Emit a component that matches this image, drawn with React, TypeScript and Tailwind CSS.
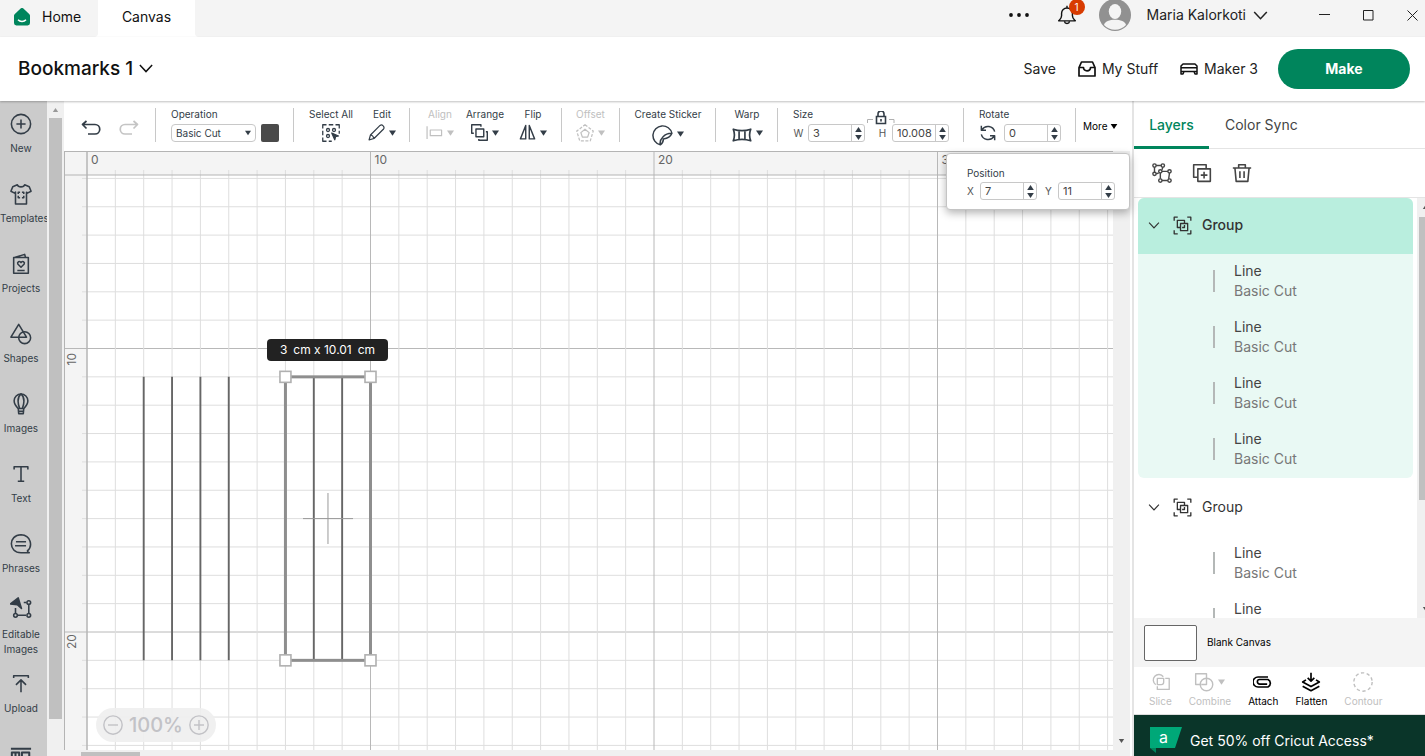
import type { ReactNode } from "react";

type IconProps = { children: ReactNode; className?: string; box?: string };

function Icon({ children, className = "size-[22px]", box = "0 0 24 24" }: IconProps) {
  return (
    <svg
      viewBox={box}
      className={`shrink-0 ${className}`}
      fill="none"
      stroke="currentColor"
      strokeWidth="1.7"
      strokeLinejoin="round"
      aria-hidden="true"
    >
      {children}
    </svg>
  );
}

function Caret({ up = false, className = "w-[7px] h-[6px]" }: { up?: boolean; className?: string }) {
  return (
    <svg viewBox="0 0 8 6" className={`shrink-0 ${className}`} fill="currentColor" aria-hidden="true">
      <path d={up ? "M0 6h8L4 0z" : "M0 0h8L4 6z"} />
    </svg>
  );
}

function Chevron({ className }: { className: string }) {
  return (
    <svg viewBox="0 0 16 10" className={`shrink-0 ${className}`} fill="none" stroke="currentColor" strokeWidth="1.7" aria-hidden="true">
      <path d="M1 1l7 7.5L15 1" />
    </svg>
  );
}

/* ---------- title bar and header ---------- */

function TitleBar() {
  return (
    <div className="flex h-[37px] shrink-0 bg-white text-sm text-[#111]">
      <button className="flex w-[98px] items-center gap-[11px] rounded-br bg-[#f4f4f4] pb-[3px] pl-[13px]">
        <svg viewBox="0 0 18 18" className="size-[18px] shrink-0" aria-hidden="true">
          <path d="M7.6.6a2 2 0 0 1 2.8 0l6 5.6c.4.4.6.9.6 1.4V15a2.4 2.4 0 0 1-2.4 2.4H3.4A2.4 2.4 0 0 1 1 15V7.6c0-.5.2-1 .6-1.4z" fill="#00855c" />
          <path d="M5 11.8c2 2.2 6 2.2 8 0" fill="none" stroke="#fff" strokeWidth="1.4" />
        </svg>
        Home
      </button>
      <button className="w-[97px] bg-white pb-[3px]">Canvas</button>
      <div className="flex flex-1 items-center justify-end rounded-bl bg-[#f4f4f4] pr-[7px] pb-[7px] text-[#222]">
        <button aria-label="Options">
          <svg viewBox="0 0 20 4" className="mr-7 h-1 w-5" fill="#111">
            <circle cx="2" cy="2" r="1.9" />
            <circle cx="10" cy="2" r="1.9" />
            <circle cx="18" cy="2" r="1.9" />
          </svg>
        </button>
        <button className="relative mr-[22px]" aria-label="Notifications">
          <Icon className="size-5">
            <path d="M2 19h20c-2-2-3.5-3-3.5-6v-3a6.500 6.500 0 0 0-13 0v3c0 3-1.5 4-3.5 6zM9 20c.5 3 5.500 3 6 0M12 1v3" stroke="#111" />
          </Icon>
          <span className="absolute -top-1.5 left-3 flex size-4 items-center justify-center rounded-full bg-[#d83b01] text-[10px] text-white">1</span>
        </button>
        <svg viewBox="0 0 32 32" className="mr-4 size-8 shrink-0" aria-label="Profile">
          <circle cx="16" cy="16" r="16" fill="#919191" />
          <ellipse cx="16" cy="12.5" rx="6.2" ry="7.5" fill="#f4f4f4" />
          <path d="M5 26c1-7 21-7 22 0a15 15 0 0 1-22 0z" fill="#f4f4f4" />
        </svg>
        <button className="flex items-center gap-[7px]">
          Maria Kalorkoti
          <Chevron className="h-[9px] w-[15px]" />
        </button>
        <button className="ml-[51px]" aria-label="Minimize">
          <svg viewBox="0 0 11 11" className="size-[11px]" stroke="#222"><path d="M0 4.5h11" /></svg>
        </button>
        <button className="ml-[33px]" aria-label="Maximize">
          <svg viewBox="0 0 11 11" className="size-[11px]" stroke="#222" fill="none"><path d="M.5.5h9.5v9.5H.5z" /></svg>
        </button>
        <button className="ml-[33px]" aria-label="Close">
          <svg viewBox="0 0 11 11" className="size-[11px]" stroke="#222"><path d="M.5.5l10 10M10.5.5l-10 10" /></svg>
        </button>
      </div>
    </div>
  );
}

function Header() {
  return (
    <header className="relative z-10 flex h-16 shrink-0 items-center bg-white pr-[15px] pl-[18px] text-sm text-[#222] shadow-[0_1px_2px_rgba(0,0,0,0.25)]">
      <button className="flex items-center gap-1.5 text-[19px] font-medium text-[#111]">
        Bookmarks 1
        <Chevron className="h-[9px] w-[14px]" />
      </button>
      <div className="ml-auto flex items-center">
        <button>Save</button>
        <button className="ml-[22px] flex items-center gap-1.5">
          <Icon className="h-[16px] w-[18px]" box="0 0 18 16">
            <path d="M1 6.5L3.500 1h11L17 6.500V15H1zM1 6.500h4.500c0 2 1.500 3.300 3.500 3.300s3.500-1.300 3.500-3.300H17" stroke="#111" />
          </Icon>
          My Stuff
        </button>
        <button className="ml-[22px] flex items-center gap-1.5">
          <Icon className="h-3 w-[18px]" box="0 0 18 12">
            <path d="M3 1h12l2 2v8h-2l-1-2.500H4L3 11H1V3zM1 4.800h16M1 8.500h16" stroke="#111" strokeWidth="1.5" />
          </Icon>
          Maker 3
        </button>
        <button className="ml-5 h-10 w-[132px] rounded-full bg-[#00855c] font-bold text-white">Make</button>
      </div>
    </header>
  );
}

/* ---------- left menu ---------- */

const menu = [
  { label: "New", icon: <><circle cx="12" cy="12" r="10.5" /><path d="M12 7v10M7 12h10" /></> },
  { label: "Templates", icon: <><path d="M8 2L3 4 1 9l4 2 1-1v13h12V10l1 1 4-2-2-5-5-2c-1 3-7 3-8 0z" /><path d="M9 12v-2h2M13 10h2v2M15 14v2h-2M11 16H9v-2" /></> },
  { label: "Projects", icon: <><path d="M4 5h16v17H4zM5 5l11-3.500 1 3.500M8 19h8" /><path d="M12 15.500l-3.500-3.500c-1-2 2-4 3.500-1.500 1.500-2.500 4.500-.5 3.500 1.500z" /></> },
  { label: "Shapes", icon: <><path d="M9.500 1.500L1 15.500h17z" /><circle cx="16" cy="16" r="6.5" /></> },
  { label: "Images", icon: <><path d="M9 17C5 13 4.500 11 4.500 8.500a7.500 7.500 0 0 1 15 0c0 2.500-.5 4.500-4.500 8.500zM9 17h6l-.5 5.500h-5zM9.500 20h5" /><path d="M10.500 17C8 10 8.500 4 12 1c3.500 3 4 9 1.500 16" /></> },
  { label: "Text", icon: <path d="M4.500 7V4h15v3M12 4v16M8.500 20h7" /> },
  { label: "Phrases", icon: <path d="M19 19.500c6-5 4-17-7-17.500C-2 2-2 21.500 12 21.500h9c-1-.5-2-1-2-2zM6.500 9.500h11M5.500 14h12" /> },
];

const menuButton = "flex h-[70px] w-[42px] shrink-0 flex-col items-center";

function LeftMenu() {
  return (
    <div className="flex w-16 shrink-0 bg-[#f0f0f0] text-[#333d47]">
      <nav className="flex w-[47px] flex-col overflow-hidden bg-[#cbcbcb] text-[10px] leading-[15px]">
        {menu.map((m) => (
          <button key={m.label} className={`${menuButton} pt-3`}>
            <Icon className="mb-1.5 size-[22px]">{m.icon}</Icon>
            <span className="min-w-full self-start">{m.label}</span>
          </button>
        ))}
        <button className={`${menuButton} pt-1.5`}>
          <Icon className="mb-2 size-[22px]">
            <path d="M.5 7.500L9 1l3.500 11.500L8 8.500z" fill="currentColor" />
            <path d="M15 6h3M20.500 8v9.500M8 20h9.500M6 12v5.500" />
            <circle cx="20.5" cy="6" r="2" /><circle cx="20.5" cy="20" r="2" /><circle cx="6" cy="20" r="2" />
          </Icon>
          Editable Images
        </button>
        <button className={`${menuButton} pt-3`}>
          <Icon className="mb-1.5 size-[22px]">
            <path d="M4 5.500V3h16v2.500M12 21V8M6.500 13L12 7.500l5.500 5.500" />
          </Icon>
          Upload
        </button>
        <button className={`${menuButton} pt-4`} aria-label="Monogram">
          <Icon>
            <path d="M1 2h22M2 6h8v12H2zM6 6v12M13 6h8v12h-8z" strokeWidth="2.2" />
          </Icon>
        </button>
      </nav>
      <div className="flex w-[17px] flex-col items-center pt-[7px]">
        <Caret up className="mb-[6px] h-1 w-[7px] text-[#999]" />
        <div className="mb-[37px] w-[13px] flex-1 bg-[#c0c0c0]" />
      </div>
    </div>
  );
}

/* ---------- toolbar ---------- */

function Spinner({ label, value, prefix }: { label: string; value: string; prefix?: string }) {
  return (
    <label className="flex shrink-0 items-center">
      {prefix && <span className="w-[15px] shrink-0 pr-1 text-center text-[#555]">{prefix}</span>}
      <span className="flex h-[18px] w-[57px] overflow-hidden rounded-[3px] border border-[#c8c8c8] bg-white">
        <input aria-label={label} defaultValue={value} className="min-w-0 flex-1 pl-1 text-[11px] text-[#444] outline-none" />
        <span className="flex w-[13px] flex-col items-center justify-center gap-[3px] border-l border-[#c8c8c8]">
          <button aria-label={`Increase ${label}`}><Caret up className="block h-[5px] w-[7px]" /></button>
          <button aria-label={`Decrease ${label}`}><Caret className="block h-[5px] w-[7px]" /></button>
        </span>
      </span>
    </label>
  );
}

const group = "flex h-[34px] shrink-0 border-r border-[#c8c8c8]";

type ToolProps = { label: string; icon: ReactNode; caret?: boolean; off?: boolean; iconFirst?: boolean; className?: string };

function Tool({ label, icon, caret = true, off = false, iconFirst = false, className = "" }: ToolProps) {
  return (
    <button disabled={off} className={`flex shrink-0 flex-col items-center gap-[3px] whitespace-nowrap ${off ? "text-[#c0c0c0]" : ""} ${className}`}>
      {!iconFirst && <span>{label}</span>}
      <span className="flex h-[21px] items-center gap-1">
        {icon}
        {caret && <Caret />}
      </span>
      {iconFirst && <span>{label}</span>}
    </button>
  );
}

function Toolbar() {
  return (
    <div className="flex h-[50px] shrink-0 pt-[7px] text-[10px] leading-3 text-[#333d47]">
      <div className={`${group} w-[92px] items-center gap-[18px] pt-1.5 pl-[17px]`}>
        <button aria-label="Undo">
          <Icon className="h-4 w-5" box="0 0 20 16"><path d="M5.500 1L1.500 4.500l4 4M1.500 4.500H14a4.500 4.500 0 0 1 0 9.500H7" /></Icon>
        </button>
        <button aria-label="Redo" className="text-[#c4c4c4]">
          <Icon className="h-4 w-5" box="0 0 20 16"><path d="M14.500 1l4 3.500-4 4M18.500 4.500H6A4.500 4.500 0 0 0 6 14h7" /></Icon>
        </button>
      </div>
      <div className={`${group} w-[138px] flex-col gap-1 pl-[15px]`}>
        <label htmlFor="operation">Operation</label>
        <div className="flex items-center gap-[5px]">
          <span className="relative flex">
            <select id="operation" className="h-[18px] w-[85px] appearance-none rounded-sm border border-[#c8c8c8] pl-1">
              <option>Basic Cut</option>
            </select>
            <Caret className="pointer-events-none absolute top-1.5 right-[5px] h-1.5 w-[6px]" />
          </span>
          <button aria-label="Operation color" className="size-[18px] rounded-[2px] bg-[#4a4a4a]" />
        </div>
      </div>
      <div className={`${group} w-[116px] justify-between pr-[13px] pl-[15px]`}>
        <Tool
          label="Select All"
          caret={false}
          icon={
            <Icon className="size-[18px]">
              <path d="M1 6V1h5M9 1h6M18 1h5v5M23 9v4M1 9v6M1 18v5h5M9 23h4" />
              <circle cx="8" cy="8" r="2" /><circle cx="16" cy="8" r="2" /><circle cx="8" cy="16" r="2" />
              <path d="M13 12l9 4-4 1-1 4z" fill="currentColor" />
            </Icon>
          }
        />
        <Tool
          label="Edit"
          icon={<Icon className="size-[17px]"><path d="M1.500 22.500l2-7L17 2c3-2 7 2 5 5L8.500 20.500zM3.500 15.500c2 0 4 2 5 5" /></Icon>}
        />
      </div>
      <div className={`${group} w-[152px] pl-4`}>
        <Tool label="Align" off className="w-[28px]" icon={<Icon className="size-[17px]"><path d="M1.500 3v18M6 8.500h16v8H6z" /></Icon>} />
        <Tool
          label="Arrange"
          className="ml-[12px] w-[38px]"
          icon={<Icon className="size-[17px]"><path d="M7 7h11v11H7zM4 13H1V1h13v3M21 11h2v12H11v-2" strokeWidth="2" /></Icon>}
        />
        <Tool label="Flip" className="ml-[15px] w-[28px]" icon={<Icon className="size-[17px]"><path d="M9.500 2v19H2zM14.500 2v19H22z" strokeWidth="2" /></Icon>} />
      </div>
      <div className={`${group} w-[58px] justify-center`}>
        <Tool
          label="Offset"
          off
          icon={
            <Icon className="size-[18px]">
              <path d="M12 1l11 8.500-4 13H5l-4-13z" strokeDasharray="4 2" />
              <path d="M12 7l5.500 4.500-2 6h-7l-2-6z" />
            </Icon>
          }
        />
      </div>
      <div className={`${group} w-24 justify-center pl-px`}>
        <Tool
          label="Create Sticker"
          icon={<Icon className="mt-1 size-[21px]"><path d="M22.800 9.500A11 11 0 1 0 9.500 22.700C8 16 15 9 22.800 9.500zM22.800 9.500C21 14 17 15.500 13 16c0 3-1 5-3.500 6.700" /></Icon>}
        />
      </div>
      <div className={`${group} w-[62px] justify-center pl-px`}>
        <Tool
          label="Warp"
          icon={<Icon className="mt-1 h-4 w-5" box="0 0 24 18"><path d="M1.500 2c6 2 15 2 21 0-2 5-2 9 0 14-6-2-15-2-21 0 2-5 2-9 0-14zM8.500 3.500v11M15.500 3.500v11" strokeWidth="2" /></Icon>}
        />
      </div>
      <div className={`${group} w-[186px] pl-[15px]`}>
        <div className="flex flex-col gap-1">
          <span>Size</span>
          <Spinner label="Width" prefix="W" value="3" />
        </div>
        <button aria-label="Lock proportions" className="-mr-[18px] ml-0.5 self-start">
          <svg viewBox="0 0 28 16" className="mt-[3px] h-4 w-7" fill="none" stroke="currentColor" aria-hidden="true">
            <path d="M.5 12V8.500H6M22 8.500h5V12" stroke="#b0b0b0" />
            <path d="M9.500 5.500h9v7h-9zM11 5.500V3a3 3 0 0 1 6 0v2.500M14 8v2.500" strokeWidth="1.6" />
          </svg>
        </button>
        <div className="flex items-end">
          <Spinner label="Height" prefix="H" value="10.008" />
        </div>
      </div>
      <div className={`${group} w-[112px] flex-col gap-1 pl-[15px]`}>
        <span>Rotate</span>
        <div className="flex items-center gap-2">
          <Icon className="ml-px size-4">
            <path d="M22 10A10.500 10.500 0 0 0 3 7M2 1v7h7M2 14a10.500 10.500 0 0 0 19 3M22 23v-7h-7" strokeWidth="2.2" />
          </Icon>
          <Spinner label="Rotate" value="0" />
        </div>
      </div>
      <button className="flex shrink-0 items-center gap-[3px] self-start pt-3 pl-[7px] text-black">
        More
        <Caret className="h-[5px] w-2" />
      </button>
    </div>
  );
}

/* ---------- canvas ---------- */

const CELL = 28.35;
const columns = Array.from({ length: 100 }, (_, i) => i);
const rows = Array.from({ length: 60 }, (_, i) => i + 4);
// the grid origin sits above the visible area
const colX = (n: number) => 23 + n * CELL;
const rowY = (n: number) => n * CELL - 86;

function Grid() {
  return (
    <svg className="absolute inset-0 size-full" fontSize="12" fill="#666" aria-label="Design canvas">
      <rect width="100%" height="24" fill="#f4f4f4" />
      <rect width="23" height="100%" fill="#f4f4f4" />
      {rows.map((n) => (
        <line key={n} x1={n % 10 ? 18 : 0} x2="100%" y1={rowY(n)} y2={rowY(n)} stroke={n % 10 ? "#dedede" : "#b8b8b8"} />
      ))}
      {columns.map((n) => (
        <line key={n} x1={colX(n)} x2={colX(n)} y1={n % 10 ? 19 : 0} y2="100%" stroke={n % 10 ? "#dedede" : "#b8b8b8"} />
      ))}
      <path d="M0 .5h2000M0 24h2000M.5 0v1500M23 0v1500" stroke="#b4b4b4" />
      {[0, 10, 20, 30].map((n) => (
        <text key={n} x={colX(n) + 4} y="13">{n}</text>
      ))}
      {[10, 20].map((n) => (
        <text key={n} transform={`translate(12 ${rowY(n) + 17}) rotate(-90)`}>{n}</text>
      ))}
      {[2, 3, 4, 5, 8, 9].map((n) => (
        <line key={n} x1={colX(n)} x2={colX(n)} y1={rowY(11)} y2={rowY(21)} stroke="#666" strokeWidth="1.9" />
      ))}
      <rect x={colX(7)} y={rowY(11)} width={3 * CELL} height={10 * CELL} fill="none" stroke="#8e8e8e" strokeWidth="3" />
      <path d={`M239 ${rowY(16)}h50M${colX(8.5)} 342v51`} stroke="#999" />
      {[7, 10].map((c) =>
        [11, 21].map((r) => (
          <rect key={`${c}-${r}`} x={colX(c) - 5.5} y={rowY(r) - 5.5} width="11" height="11" fill="#fff" stroke="#b0b0b0" strokeWidth="1.6" />
        )),
      )}
    </svg>
  );
}

function Canvas() {
  return (
    <div className="relative mr-0.5 flex min-h-0 flex-1 flex-col bg-[#f0f0f0]">
      <div className="flex min-h-0 flex-1">
        <div className="relative flex-1 overflow-hidden bg-white">
          <Grid />
          <div className="absolute top-[188px] left-[203px] flex h-[22px] w-[121px] items-center justify-center gap-1.5 rounded bg-[#222] text-xs whitespace-nowrap text-white">
            <span>3</span>
            <span>cm x 10.01</span>
            <span>cm</span>
          </div>
          <div className="absolute bottom-2 left-8 flex h-[34px] w-[120px] items-center justify-center gap-1.5 rounded-full bg-[#eee]/90 text-[#c2c2c6]">
            <button aria-label="Zoom out"><Icon className="block size-5"><circle cx="12" cy="12" r="11" /><path d="M6 12h12" /></Icon></button>
            <span className="text-xl font-medium">100%</span>
            <button aria-label="Zoom in"><Icon className="block size-5"><circle cx="12" cy="12" r="11" /><path d="M6 12h12M12 6v12" /></Icon></button>
          </div>
        </div>
        <div className="flex w-[17px] flex-col items-center justify-end pb-[7px] text-[#555]">
          <Caret className="h-1 w-[7px]" />
        </div>
      </div>
      <div className="flex h-1.5 pt-0.5 pl-[17px]">
        <div className="w-[59px] bg-[#c0c0c0]" />
      </div>
      <div className="absolute top-0.5 right-0 h-[57px] w-[184px] rounded border border-[#c4c4c4] bg-white pt-[13px] pl-5 text-[10px] leading-3 text-[#333d47] shadow-[0_3px_8px_rgba(0,0,0,0.3)]">
        <div>Position</div>
        <div className="mt-[3px] -ml-0.5 flex gap-[6px]">
          <Spinner label="X" prefix="X" value="7" />
          <Spinner label="Y" prefix="Y" value="11" />
        </div>
      </div>
    </div>
  );
}

/* ---------- layers panel ---------- */

function LayerGroup({ count, selected = false }: { count: number; selected?: boolean }) {
  return (
    <section className={`mb-0.5 overflow-hidden rounded-md ${selected ? "bg-[#e9f9f4]" : ""}`}>
      <button className={`flex h-14 w-full items-center pb-0.5 pl-2.5 text-[#333] ${selected ? "bg-[#b9eede] font-medium" : ""}`}>
        <Chevron className="h-[7px] w-3" />
        <Icon className="mr-2.5 ml-[13px] size-[19px]">
          <path d="M1.500 6V1.500H6M18 1.500h4.500V6M22.500 18v4.500H18M6 22.500H1.500V18M9.500 14.500h-4v-9h9v4" />
          <path d="M9.500 9.500h9v9h-9z" />
          <path d="M11.500 14.500h3v-3" />
        </Icon>
        Group
      </button>
      {Array.from({ length: count }, (_, i) => (
        <div key={i} className="flex h-14 items-center pb-0.5 pl-[75px]">
          <div className="mr-[19px] h-[22px] w-0.5 bg-[#b4b8b7]" />
          <div className="leading-5">
            <div className="text-[#444]">Line</div>
            <div className="text-[#777]">Basic Cut</div>
          </div>
        </div>
      ))}
    </section>
  );
}

function LayersPanel() {
  return (
    <aside className="flex w-[293px] shrink-0 flex-col border-l-2 border-[#e4e4e4] text-sm">
      <div className="flex h-12 shrink-0 border-b border-[#e4e4e4]">
        <button className="h-12 w-[75px] border-b-[3px] border-[#00855c] pt-0.5 font-medium text-[#00855c]">Layers</button>
        <button className="px-4 text-[#444]">Color Sync</button>
      </div>
      <div className="flex h-[49px] shrink-0 items-center gap-5 border-b border-[#e4e4e4] pl-[18px] text-[#444]">
        <button aria-label="Group">
          <Icon className="block size-5">
            <path d="M5 3h6M3 5v6M13 5l-1 3M5 13l3-1M12 10h7M10 12v7M21 12l-1 7M12 21h7" />
            <circle cx="3" cy="3" r="2" /><circle cx="13" cy="3" r="2" /><circle cx="3" cy="13" r="2" />
            <circle cx="10" cy="10" r="2" /><circle cx="21" cy="10" r="2" /><circle cx="10" cy="21" r="2" /><circle cx="21" cy="21" r="2" />
          </Icon>
        </button>
        <button aria-label="Duplicate">
          <Icon className="block size-5"><path d="M7 7h15v15H7zM7 17H2V2h15v5M14.500 10.500v8M10.500 14.500h8" strokeWidth="1.9" /></Icon>
        </button>
        <button aria-label="Delete">
          <Icon className="block size-5"><path d="M1 6h22M8 6V2h8v4M3.500 6l1.500 16h14l1.500-16M9.500 10v8M14.500 10v8" strokeWidth="1.9" /></Icon>
        </button>
      </div>
      <div className="flex min-h-0 flex-1">
        <div className="min-w-0 flex-1 overflow-hidden pr-1 pl-1">
          <LayerGroup count={4} selected />
          <LayerGroup count={2} />
        </div>
        <div className="flex w-2 flex-col overflow-hidden bg-[#f0f0f0] pt-[7px] pb-[7px] pl-0.5 text-[#555]">
          <Caret up className="ml-[3px] h-1 w-[7px]" />
          <div className="mt-2 h-[283px] bg-[#c0c0c0]" />
          <Caret className="mt-auto ml-[3px] h-1 w-[7px]" />
        </div>
      </div>
      <button className="flex h-[49px] shrink-0 items-center gap-2.5 bg-[#f4f4f4] pl-2.5 text-[10px] text-black">
        <span className="h-9 w-[53px] rounded-[2px] border border-[#666] bg-white" />
        Blank Canvas
      </button>
      <div className="flex h-12 shrink-0 items-start gap-[17px] border-b border-[#ddd] pt-1 pl-[15px] text-[10px] leading-3 text-black">
        <Tool iconFirst label="Slice" off caret={false} icon={<Icon className="size-[19px]"><path d="M6 16A7 7 0 1 1 15.500 6M18 8h5v14H8v-4" /><path d="M8 8h8v5c0 2-1 3-3 3H8z" /></Icon>} />
        <Tool iconFirst label="Combine" off icon={<Icon className="size-5"><path d="M9 15H2V2h13v6" /><circle cx="15" cy="15" r="7.5" /><path d="M15 8v7H9" /></Icon>} />
        <Tool iconFirst label="Attach" caret={false} icon={<Icon className="size-5"><path d="M18 6H6a6 6 0 0 0 0 12h12a5 5 0 0 0 0-9H8a2.500 2.500 0 0 0 0 5.500h9" strokeWidth="2" /></Icon>} />
        <Tool iconFirst label="Flatten" caret={false} icon={<Icon className="size-5"><path d="M12 1v10M8 7l4 4 4-4M6 9.500L2 12l10 5.500L22 12l-4-2.500M2 17l10 5.500L22 17" strokeWidth="2" /></Icon>} />
        <Tool iconFirst label="Contour" off caret={false} icon={<Icon className="size-5"><circle cx="12" cy="12" r="11" strokeDasharray="4 3" /></Icon>} />
      </div>
      <a href="#access" className="flex h-[41px] shrink-0 items-center gap-2 bg-[#0a3529] pt-2.5 pl-4 text-white">
        <span className="relative flex">
          <svg viewBox="0 0 32 27" className="h-[27px] w-8" aria-hidden="true">
            <path d="M0 0h32l-7 21H0z" fill="#00a878" />
            <path d="M0 21h6v5z" fill="#00855c" />
          </svg>
          <span className="absolute top-0 left-[9px] text-base leading-5">a</span>
        </span>
        Get 50% off Cricut Access*
      </a>
    </aside>
  );
}

export default function App() {
  return (
    <div className="flex h-screen flex-col overflow-hidden bg-white font-['Inter','Liberation_Sans',sans-serif]">
      <TitleBar />
      <Header />
      <div className="flex min-h-0 flex-1">
        <LeftMenu />
        <main className="flex min-w-0 flex-1 flex-col">
          <Toolbar />
          <Canvas />
        </main>
        <LayersPanel />
      </div>
    </div>
  );
}
